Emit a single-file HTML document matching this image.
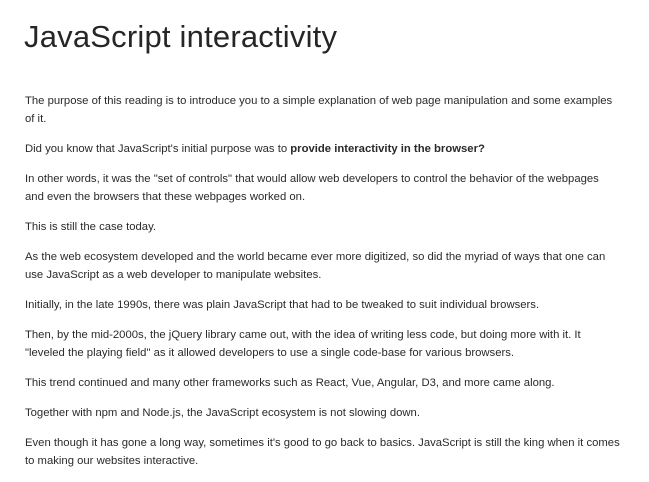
<!DOCTYPE html>
<html><head><meta charset="utf-8"><style>
html,body{margin:0;padding:0;background:#fff;width:649px;height:478px;overflow:hidden}
body{font-family:"Liberation Sans",sans-serif;color:#2a2a2a}
h1{position:absolute;left:24px;top:15px;margin:0;font-size:31px;font-weight:normal;line-height:44px;color:#262626;letter-spacing:0.2px}
.c{position:absolute;left:25px;top:92px;width:610px;font-size:11.3px;line-height:18px;white-space:nowrap}
p{margin:0 0 12px 0}
b{font-weight:bold}
</style></head><body>
<h1>JavaScript interactivity</h1>
<div class="c">
<p>The purpose of this reading is to introduce you to a simple explanation of web page manipulation and some examples<br>of it.</p>
<p>Did you know that JavaScript's initial purpose was to <b>provide interactivity in the browser?</b></p>
<p>In other words, it was the "set of controls" that would allow web developers to control the behavior of the webpages<br>and even the browsers that these webpages worked on.</p>
<p>This is still the case today.</p>
<p>As the web ecosystem developed and the world became ever more digitized, so did the myriad of ways that one can<br>use JavaScript as a web developer to manipulate websites.</p>
<p>Initially, in the late 1990s, there was plain JavaScript that had to be tweaked to suit individual browsers.</p>
<p>Then, by the mid-2000s, the jQuery library came out, with the idea of writing less code, but doing more with it. It<br>"leveled the playing field" as it allowed developers to use a single code-base for various browsers.</p>
<p>This trend continued and many other frameworks such as React, Vue, Angular, D3, and more came along.</p>
<p>Together with npm and Node.js, the JavaScript ecosystem is not slowing down.</p>
<p>Even though it has gone a long way, sometimes it's good to go back to basics. JavaScript is still the king when it comes<br>to making our websites interactive.</p>
</div>
</body></html>
